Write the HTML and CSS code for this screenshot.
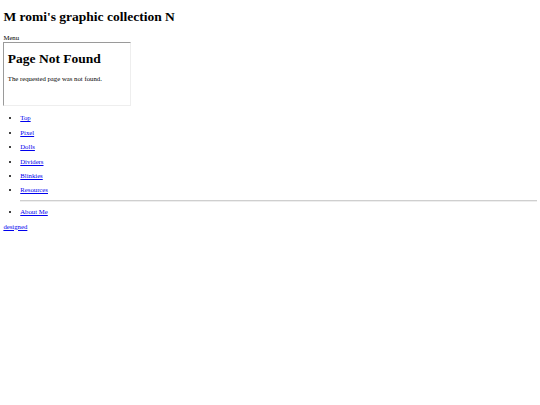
FILE: index.html
```html
<!DOCTYPE html>
<html lang="en">
<head>
    <meta charset="UTF-8">
    <title>romi's graphic collection</title>
    <link rel="stylesheet" href="styles.css">
</head>
<body>
    <h1 class="site-title">M romi's graphic collection N</h1>

    <div class="menu-label">Menu</div>
    <div class="frame-line">
        <div class="frame">
            <h1 class="frame-title">Page Not Found</h1>
            <p class="frame-text">The requested page was not found.</p>
        </div>
    </div>

    <ul class="nav-list">
        <li><a href="#">Top</a></li>
        <li><a href="#">Pixel</a></li>
        <li><a href="#">Dolls</a></li>
        <li><a href="#">Dividers</a></li>
        <li><a href="#">Blinkies</a></li>
        <li><a href="#">Resources</a></li>
        <hr class="nav-rule">
        <li><a href="#">About Me</a></li>
    </ul>

    <a href="#" class="credit">designed</a>
</body>
</html>
```

FILE: styles.css
```css
body {
    margin: 3.375px;
    font-family: "Liberation Serif", "Times New Roman", serif;
    font-size: 6.75px;
    line-height: 7.8px;
    color: #000;
    background: #fff;
}
a {
    color: #0000ee;
}
.site-title {
    font-size: 13.5px;
    line-height: 15.5px;
    margin: 5.7px 0 9.6px;
}
.frame {
    display: inline-block;
    width: 128px;
    height: 64px;
    overflow: hidden;
    border: 1px solid;
    border-color: #9a9a9a #eeeeee #eeeeee #9a9a9a;
    padding: 0 3.4px;
    box-sizing: border-box;
}
.frame-title {
    font-size: 13.5px;
    line-height: 15.5px;
    margin: 8.3px 0 8.2px;
}
.frame-text {
    margin: 6.75px 0;
}
.nav-list {
    margin: 6.6px 0 6.75px;
    padding-left: 16.875px;
}
.nav-list li {
    margin: 6.6px 0;
}
.nav-rule {
    margin: -0.5px 0;
    border: none;
    border-top: 1px solid #cfcfcf;
    border-bottom: 1px solid #eeeeee;
}
```
